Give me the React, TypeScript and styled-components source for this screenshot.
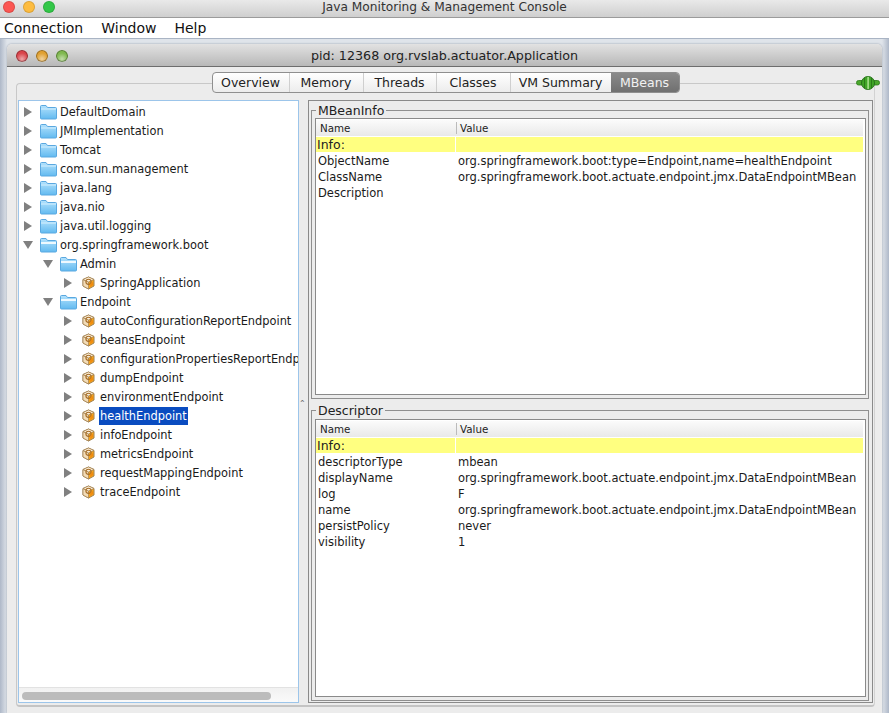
import React from "react";
import styled, { createGlobalStyle } from "styled-components";

const Global = createGlobalStyle`
  html, body { margin: 0; padding: 0; background: #c4ccd8; }
  * { box-sizing: border-box; }
`;
const FONT = `"DejaVu Sans", "Liberation Sans", sans-serif`;

const Page = styled.div`
  width: 889px; height: 713px; overflow: hidden; display: flex; flex-direction: column;
  font-family: ${FONT}; color: #111;
`;
const TitleBar = styled.div`
  position: relative; height: 18px; flex: none; display: flex; align-items: center; justify-content: center;
  background: linear-gradient(#e9e9e9, #cfcfcf); border-bottom: 1px solid #9b9b9b;
  font-size: 12.2px; color: #333; padding-bottom: 3px;
`;
const Lights = styled.div<{ $left: number; $gap: number; $top: number }>`
  position: absolute; left: ${p => p.$left}px; top: ${p => p.$top}px; display: flex; gap: ${p => p.$gap}px;
`;
const Light = styled.span<{ $c: string; $glossy?: boolean }>`
  width: 12px; height: 12px; border-radius: 50%;
  background: ${p => p.$glossy ? `radial-gradient(circle at 50% 75%, #fff8 0, transparent 55%), ${p.$c}` : p.$c};
  box-shadow: ${p => p.$glossy ? "inset 0 0 0 1px #0005" : "inset 0 0 0 1px #0002"};
`;
const MenuBar = styled.div`
  height: 21px; flex: none; background: #fff; display: flex; gap: 18px; padding-left: 4px; align-items: center;
  font-size: 14px; border-bottom: 1px solid #a9b4c4;
`;
const MenuItem = styled.span``;
const Desktop = styled.div`
  flex: 1; min-height: 0; padding: 5px 7px 0 7px; display: flex;
  background: linear-gradient(90deg, #aeb8c8 0, #dfe4ea 7px, #dfe4ea 882px, #aeb8c8 889px);
`;
const InnerWindow = styled.div`
  flex: 1; min-width: 0; display: flex; flex-direction: column; background: #ececec;
  border-radius: 5px 5px 0 0; box-shadow: 0 0 2px #8a93a3;
`;
const InnerTitle = styled.div`
  position: relative; height: 23px; flex: none; display: flex; align-items: center; justify-content: center;
  background: linear-gradient(#e2e2e2, #b8b8b8); border-bottom: 1px solid #6d6d6d; border-radius: 5px 5px 0 0;
  font-size: 12.7px; color: #222;
`;
const Body = styled.div`
  flex: 1; min-height: 0; display: flex; flex-direction: column; padding: 5px 7px 6px 9px; position: relative;
`;
const TabRow = styled.div`
  height: 21px; flex: none; display: flex; justify-content: center; position: relative; z-index: 2;
  margin-right: 2px;
`;
const Tabs = styled.div`
  display: flex; height: 21px; border: 1px solid #8f8f8f; border-radius: 4px; overflow: hidden;
  background: linear-gradient(#fff, #ececec); transform: translateX(1px);
`;
const Tab = styled.div<{ $active?: boolean; $first?: boolean; $w: number }>`
  display: flex; align-items: center; justify-content: center; width: ${p => p.$w}px; font-size: 12.5px;
  color: ${p => p.$active ? "#f2f2f2" : "#222"};
  background: ${p => p.$active ? "linear-gradient(#8a8a8a, #707070)" : "transparent"};
  border-left: ${p => p.$first || p.$active ? "0" : "1px solid #cfcfcf"};
`;
const Plug = styled.svg`
  position: absolute; right: -7px; top: 4px;
`;
const TabPane = styled.div`
  flex: 1; min-height: 0; margin-top: -10px; border: 1px solid #c8c8c8; border-right-color: #d2d2d2; border-bottom: 2px solid #c4c4c4;
  border-radius: 4px; padding: 16px 1px 2px 1px; display: flex; gap: 9px;
`;
const TreePanel = styled.div`
  width: 281px; flex: none; background: #fff; border: 1px solid #9cc5ea; display: flex; flex-direction: column; position: relative;
`;
const TreeScroll = styled.div`
  flex: 1; min-height: 0; overflow: hidden; padding-top: 1px; padding-left: 4px;
`;
const Row = styled.div<{ $level: number }>`
  height: 19px; display: flex; align-items: center; white-space: nowrap; font-size: 11.4px;
  padding-left: ${p => p.$level * 20}px;
`;
const Arrow = styled.svg`
  width: 10px; height: 10px; flex: none; margin-right: 7px;
`;
const NodeIcon = styled.svg`
  width: 17px; height: 16px; flex: none; margin-right: 2px;
`;
const Label = styled.span<{ $sel?: boolean }>`
  padding: 0 1px; height: 18px; line-height: 18px;
  background: ${p => p.$sel ? "#0a4cc0" : "transparent"};
  color: ${p => p.$sel ? "#fff" : "#1a1a1a"};
`;
const HScroll = styled.div`
  height: 15px; flex: none; background: linear-gradient(#f1f1f1, #fafafa); border-top: 1px solid #e2e2e2; padding: 4px 3px 2px 3px;
`;
const Thumb = styled.div`
  width: 249px; height: 8px; border-radius: 4px; background: #bcbcbc;
`;
const RightPanel = styled.div`
  flex: 1; min-width: 0; border: 1px solid #8a8a8a; padding: 3px 3px 3px 2px; display: flex; flex-direction: column; gap: 5px; position: relative;
`;
const Split = styled.span`
  position: absolute; left: -10px; top: 300px; font-size: 8px; color: #666; line-height: 6px;
`;
const Group = styled.fieldset<{ $h: number; $pt: number }>`
  margin: 0; height: ${p => p.$h}px; flex: none; min-width: 0; border: 1px solid #8f8f8f; padding: ${p => p.$pt}px 2px 2px 3px;
`;
const Legend = styled.legend`
  padding: 0 2px; margin-left: 1px; font-size: 12.5px; line-height: 13px; color: #222;
`;
const Table = styled.div<{ $h: number }>`
  height: ${p => p.$h}px; background: #fff; border: 1px solid #8a8a8a; padding-top: 1px; font-size: 11.5px;
  display: flex; flex-direction: column;
`;
const Head = styled.div`
  display: grid; grid-template-columns: 140px 1fr; height: 16px; flex: none; align-items: center;
  background: linear-gradient(#fbfbfb, #e9e9e9); font-size: 10.3px; color: #222; margin-right: 2px;
`;
const HeadCell = styled.div<{ $div?: boolean }>`
  padding-left: ${p => p.$div ? 3 : 4}px; border-left: ${p => p.$div ? "1px solid #bbb" : "0"};
`;
const InfoRow = styled.div`
  display: grid; grid-template-columns: 139px 1fr; gap: 1px; height: 15px; flex: none; align-items: center;
  background: #fff; margin: 1px 2px 1px 0; font-size: 12.5px;
`;
const InfoCell = styled.div`
  height: 15px; line-height: 15px; background: #ffff80; padding-left: 1px; color: #222;
`;
const DataRow = styled.div`
  display: grid; grid-template-columns: 140px 1fr; height: 16px; flex: none; align-items: center; white-space: nowrap;
  color: #1a1a1a;
`;
const Cell = styled.div`
  padding-left: 2px;
`;

const TriRight = () => (
  <Arrow viewBox="0 0 10 10"><path d="M1 0 L9 5 L1 10 Z" fill="#808080" /></Arrow>
);
const TriDown = () => (
  <Arrow viewBox="0 0 10 10"><path d="M0 1 L10 1 L5 9 Z" fill="#808080" /></Arrow>
);
const Folder = ({ open }: { open?: boolean }) => (
  <NodeIcon viewBox="0 0 17 16">
    <defs>
      <linearGradient id="fold" x1="0" y1="0" x2="0" y2="1">
        <stop offset="0" stopColor="#b4e2fc" />
        <stop offset="1" stopColor="#62baf0" />
      </linearGradient>
    </defs>
    <path d="M0.5 2.5 Q0.5 1.5 1.5 1.5 H6 L7.5 3.5 H15.5 Q16.5 3.5 16.5 4.5 V14 Q16.5 15 15.5 15 H1.5 Q0.5 15 0.5 14 Z" fill="url(#fold)" stroke="#5aa8e0" strokeWidth="1" />
    {open ? <path d="M1 6 H16" stroke="#eef9ff" strokeWidth="2" /> : <path d="M1 5 H16" stroke="#d4effe" strokeWidth="1" />}
  </NodeIcon>
);
const Bean = () => (
  <NodeIcon viewBox="0 0 17 16">
    <path d="M8.5 2 L14 4.5 V11 L8.5 14 L3 11 V4.5 Z" fill="#f9a51a" stroke="#a08050" strokeWidth="1" />
    <path d="M3 4.5 L8.5 7 V14 L3 11 Z" fill="#f2dcb8" stroke="#a08050" strokeWidth="0.7" />
    <path d="M3 4.5 L8.5 2 L14 4.5 L8.5 7 Z" fill="#fbeed8" stroke="#a08050" strokeWidth="0.7" />
    <circle cx="8.5" cy="6.8" r="2.6" fill="none" stroke="#a86e28" strokeWidth="1.1" />
    <path d="M10.5 8.5 L13 7 V10 L10 12 Z" fill="#f08c10" />
  </NodeIcon>
);

type Node = { label: string; level: number; kind: "folder" | "open" | "bean"; sel?: boolean };
const tree: Node[] = [
  { label: "DefaultDomain", level: 0, kind: "folder" },
  { label: "JMImplementation", level: 0, kind: "folder" },
  { label: "Tomcat", level: 0, kind: "folder" },
  { label: "com.sun.management", level: 0, kind: "folder" },
  { label: "java.lang", level: 0, kind: "folder" },
  { label: "java.nio", level: 0, kind: "folder" },
  { label: "java.util.logging", level: 0, kind: "folder" },
  { label: "org.springframework.boot", level: 0, kind: "open" },
  { label: "Admin", level: 1, kind: "open" },
  { label: "SpringApplication", level: 2, kind: "bean" },
  { label: "Endpoint", level: 1, kind: "open" },
  { label: "autoConfigurationReportEndpoint", level: 2, kind: "bean" },
  { label: "beansEndpoint", level: 2, kind: "bean" },
  { label: "configurationPropertiesReportEndp", level: 2, kind: "bean" },
  { label: "dumpEndpoint", level: 2, kind: "bean" },
  { label: "environmentEndpoint", level: 2, kind: "bean" },
  { label: "healthEndpoint", level: 2, kind: "bean", sel: true },
  { label: "infoEndpoint", level: 2, kind: "bean" },
  { label: "metricsEndpoint", level: 2, kind: "bean" },
  { label: "requestMappingEndpoint", level: 2, kind: "bean" },
  { label: "traceEndpoint", level: 2, kind: "bean" },
];
const tabs = [
  { t: "Overview", w: 76 }, { t: "Memory", w: 74 }, { t: "Threads", w: 73 },
  { t: "Classes", w: 74 }, { t: "VM Summary", w: 101 }, { t: "MBeans", w: 68, active: true },
];
const CLS = "org.springframework.boot.actuate.endpoint.jmx.DataEndpointMBean";
const info = [
  ["ObjectName", "org.springframework.boot:type=Endpoint,name=healthEndpoint"],
  ["ClassName", CLS],
  ["Description", ""],
];
const desc = [
  ["descriptorType", "mbean"],
  ["displayName", CLS],
  ["log", "F"],
  ["name", CLS],
  ["persistPolicy", "never"],
  ["visibility", "1"],
];

const InfoTable = ({ rows, h }: { rows: string[][]; h: number }) => (
  <Table $h={h}>
    <Head><HeadCell>Name</HeadCell><HeadCell $div>Value</HeadCell></Head>
    <InfoRow><InfoCell>Info:</InfoCell><InfoCell /></InfoRow>
    {rows.map(r => (
      <DataRow key={r[0]}><Cell>{r[0]}</Cell><Cell>{r[1]}</Cell></DataRow>
    ))}
  </Table>
);

export default function App() {
  return (
    <Page>
      <Global />
      <TitleBar>
        <Lights $left={3} $gap={8} $top={1}>
          <Light $c="#fc5753" /><Light $c="#fdbc40" /><Light $c="#33c748" />
        </Lights>
        Java Monitoring &amp; Management Console
      </TitleBar>
      <MenuBar>
        <MenuItem>Connection</MenuItem><MenuItem>Window</MenuItem><MenuItem>Help</MenuItem>
      </MenuBar>
      <Desktop>
        <InnerWindow>
          <InnerTitle>
            <Lights $left={9} $gap={8} $top={6}>
              <Light $c="#d9444a" $glossy /><Light $c="#e0a030" $glossy /><Light $c="#7fb84e" $glossy />
            </Lights>
            pid: 12368 org.rvslab.actuator.Application
          </InnerTitle>
          <Body>
            <TabRow>
              <Tabs>
                {tabs.map((t, i) => (
                  <Tab key={t.t} $w={t.w} $first={i === 0} $active={t.active}>{t.t}</Tab>
                ))}
              </Tabs>
              <Plug width="24" height="14" viewBox="0 0 24 14">
                <rect x="0.5" y="4.5" width="23" height="4.5" rx="2" fill="#4aa82c" stroke="#2a7a18" strokeWidth="0.8" />
                <ellipse cx="12" cy="7" rx="6.5" ry="6.5" fill="#3fa526" stroke="#25701a" />
                <rect x="11.4" y="0.8" width="1.4" height="12.4" fill="#b4e898" />
                <rect x="8" y="2" width="1" height="10" fill="#2a7a18" />
                <rect x="15" y="2" width="1" height="10" fill="#2a7a18" />
              </Plug>
            </TabRow>
            <TabPane>
              <TreePanel>
                <TreeScroll>
                  {tree.map(n => (
                    <Row key={n.label} $level={n.level}>
                      {n.kind === "open" ? <TriDown /> : <TriRight />}
                      {n.kind === "bean" ? <Bean /> : <Folder open={n.kind === "open"} />}
                      <Label $sel={n.sel}>{n.label}</Label>
                    </Row>
                  ))}
                </TreeScroll>
                <HScroll><Thumb /></HScroll>
              </TreePanel>
              <RightPanel>
                <Split>⌃</Split>
                <Group $h={295} $pt={1}>
                  <Legend>MBeanInfo</Legend>
                  <InfoTable rows={info} h={277} />
                </Group>
                <Group $h={297} $pt={2}>
                  <Legend>Descriptor</Legend>
                  <InfoTable rows={desc} h={278} />
                </Group>
              </RightPanel>
            </TabPane>
          </Body>
        </InnerWindow>
      </Desktop>
    </Page>
  );
}
